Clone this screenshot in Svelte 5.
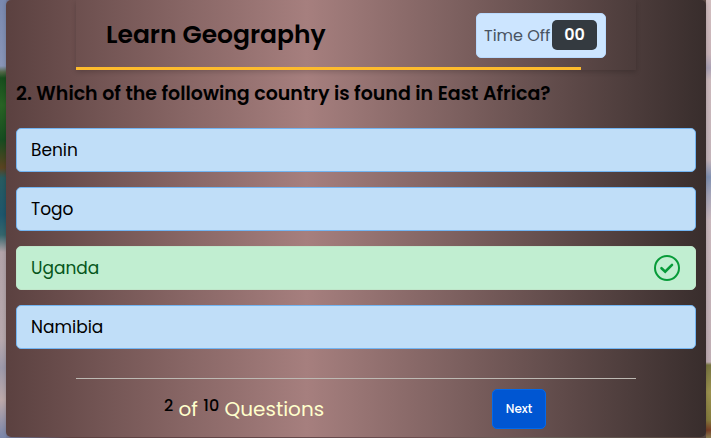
<script>
  const current = 2;
  const total = 10;
  const seconds = '00';
  const progress = 90.2;
  const question = 'Which of the following country is found in East Africa?';
  const options = [
    { label: 'Benin' },
    { label: 'Togo' },
    { label: 'Uganda', correct: true },
    { label: 'Namibia' }
  ];
</script>

<div class="scene">
  <main class="quiz">
    <header>
      <h1>Learn Geography</h1>
      <div class="timer">
        <span class="timer-label">Time Off</span>
        <span class="seconds">{seconds}</span>
      </div>
      <div class="time-line" style="width: {progress}%"></div>
    </header>

    <section>
      <h2>{current}. {question}</h2>
      <div class="options">
        {#each options as option}
          <button type="button" class="option" class:correct={option.correct}>
            <span>{option.label}</span>
            {#if option.correct}
              <svg viewBox="0 0 26 26" width="26" height="26" aria-hidden="true">
                <circle cx="13" cy="13" r="12" />
                <path class="tick" d="M7.5 13.2 L11.2 16.6 L18 9.8" />
              </svg>
            {/if}
          </button>
        {/each}
      </div>
    </section>

    <footer>
      <p><b>{current}</b> of <b>{total}</b> Questions</p>
      <button type="button" class="next">Next</button>
    </footer>
  </main>
</div>

<style>
  .scene {
    padding: 0 5px 1px 6px;
    font-family: Poppins, Inter, 'Open Sans', sans-serif;
    background:
      linear-gradient(180deg, #7989b0 0, #8995b7 66px, #526747 72px, #174d1d 78px, #286324 105px, #174c20 140px, #5b4320 168px, #275b60 178px, #1e566c 215px, #35666c 235px, #b2a3a8 252px, #b7a8ad 340px, #9d99aa 368px, #bda9aa 400px, #7985aa 438px) left / 6px 100% no-repeat,
      linear-gradient(180deg, #d2bebf 0, #c8b3b8 54px, #aaa1b5 68px, #cbb8bb 80px, #c3b3b9 160px, #8090b1 177px, #a5a4b8 195px, #c9b7bc 220px, #bfadb3 362px, #777440 365px, #9b914f 392px, #857b3d 420px, #763d26 430px, #8b7d52 438px) right / 5px 100% no-repeat,
      linear-gradient(90deg, #7985aa, #654747 10%, #765557 60%, #746a61 75%, #5b4943);
  }

  .quiz {
    box-sizing: border-box;
    padding: 0 10px 8px;
    border-radius: 5px;
    background: linear-gradient(90deg, #5b4140 0%, #a67f7e 43%, #382d2c 100%);
    box-shadow: 0 0 4px rgba(0, 0, 0, 0.2);
  }

  header {
    position: relative;
    box-sizing: border-box;
    display: flex;
    align-items: center;
    justify-content: space-between;
    height: 70px;
    margin: 0 60px;
    padding: 0 30px;
    box-shadow: 0 2px 5px rgba(0, 0, 0, 0.18);
  }

  h1 {
    margin: 0;
    color: #000;
    font-size: 25px;
    line-height: 36px;
    font-weight: 600;
  }

  .timer {
    box-sizing: border-box;
    display: flex;
    align-items: center;
    justify-content: space-between;
    width: 130px;
    height: 45px;
    padding: 0 8px 0 7px;
    border: 1px solid #b8daff;
    border-radius: 5px;
    background: #cce5ff;
  }

  .timer-label {
    color: #495361;
    font-size: 16px;
    white-space: nowrap;
  }

  .seconds {
    width: 45px;
    border-radius: 5px;
    background: #343a40;
    color: #fff;
    font-size: 16px;
    line-height: 30px;
    font-weight: 600;
    text-align: center;
  }

  .time-line {
    position: absolute;
    left: 0;
    bottom: 0;
    height: 3px;
    background: #fdbb2d;
  }

  h2 {
    margin: 0;
    padding: 9px 0 19px;
    color: #000;
    font-size: 19px;
    line-height: 30px;
    font-weight: 600;
  }

  .options {
    display: flex;
    flex-direction: column;
    gap: 15px;
  }

  .option {
    display: flex;
    align-items: center;
    justify-content: space-between;
    height: 44px;
    padding: 0 15px 1px 14px;
    border: 1px solid #73b5f2;
    border-radius: 5px;
    background: #c0def8;
    color: #000;
    font-family: inherit;
    font-size: 17px;
    text-align: left;
  }

  .option.correct {
    border-color: #bfe5c9;
    background: #c1eed1;
    color: #06561b;
  }

  svg {
    fill: none;
    stroke: #079b39;
    stroke-width: 2;
  }

  .tick {
    stroke-width: 2.6;
    stroke-linecap: round;
    stroke-linejoin: miter;
  }

  footer {
    display: flex;
    align-items: center;
    justify-content: space-between;
    margin: 29px 60px 0;
    padding: 10px 90px 0 88px;
    border-top: 1px solid #bdb9b3;
  }

  p {
    margin: 0;
    color: #ffffcc;
    font-size: 20px;
    line-height: 30px;
  }

  b {
    position: relative;
    top: -5px;
    color: #000;
    font-size: 16px;
    line-height: 16px;
    font-weight: 500;
  }

  .next {
    width: 54px;
    height: 40px;
    padding: 0;
    border: 1px solid #0069ed;
    border-radius: 5px;
    background: #0056d2;
    color: #fff;
    font-family: inherit;
    font-size: 12px;
    font-weight: 500;
  }
</style>
